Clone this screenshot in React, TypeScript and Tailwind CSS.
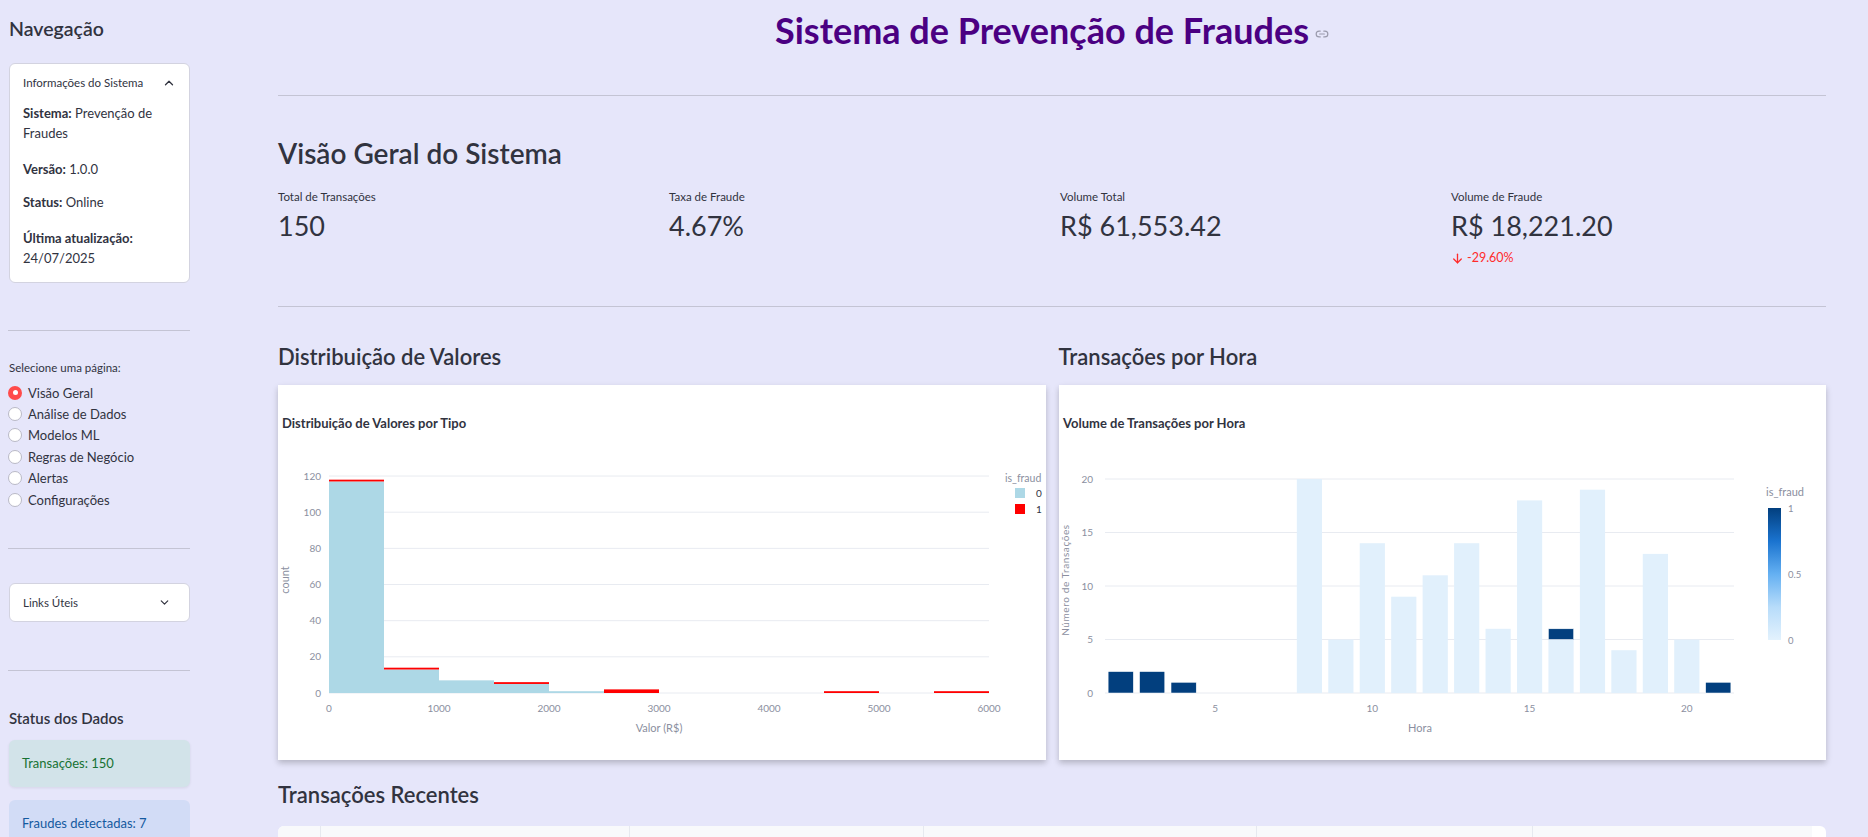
import React from "react";
import { ChevronUp, ChevronDown, Link2 } from "lucide-react";

const FONT = "Lato, sans-serif";

function Radio({ label, selected }: { label: string; selected?: boolean }) {
  return (
    <div className="flex h-[21.4px] items-center">
      {selected ? (
        <span className="ml-[8px] flex h-[14px] w-[14px] items-center justify-center rounded-full bg-[#ff4b4b]">
          <span className="h-[5px] w-[5px] rounded-full bg-white" />
        </span>
      ) : (
        <span className="ml-[8px] h-[14px] w-[14px] rounded-full border border-[#b9b9c6] bg-white" />
      )}
      <span className="ml-[6px] text-[13px] leading-[16px] text-[#31333f]">{label}</span>
    </div>
  );
}

function Divider({ className = "" }: { className?: string }) {
  return <div className={"h-px bg-[#c4c4d4] " + className} />;
}

function HistChart() {
  const y = (v: number) => 308 - v * 1.808;
  const x = (v: number) => 51 + v * 0.11;
  const bins: [number, number, number][] = [
    [0, 117, 1],
    [500, 13, 1],
    [1000, 7, 0],
    [1500, 5, 1],
    [2000, 1, 0],
    [2500, 0, 2],
    [4500, 0, 1],
    [5500, 0, 1],
  ];
  const tick = "#8b8fa0";
  return (
    <svg width={767} height={375} className="block" fontFamily={FONT}>
      <text x={4} y={42.5} fontSize={13} fontWeight={700} fill="#31333f">
        Distribuição de Valores por Tipo
      </text>
      {[0, 20, 40, 60, 80, 100, 120].map((v) => (
        <g key={v}>
          <line x1={51} x2={711} y1={y(v)} y2={y(v)} stroke="#e8ebf1" strokeWidth={1} />
          <text x={43} y={y(v) + 3.5} textAnchor="end" fontSize={10} fill={tick}>
            {v}
          </text>
        </g>
      ))}
      {bins.map(([s, b, r]) => (
        <g key={s}>
          {b > 0 && <rect x={x(s)} y={y(b)} width={55} height={b * 1.808} fill="#add8e6" />}
          {r > 0 && <rect x={x(s)} y={y(b + r)} width={55} height={r * 1.808} fill="#ff0000" />}
        </g>
      ))}
      {[0, 1000, 2000, 3000, 4000, 5000, 6000].map((v) => (
        <text key={v} x={x(v)} y={326.5} textAnchor="middle" fontSize={10} fill={tick}>
          {v}
        </text>
      ))}
      <text x={381} y={347} textAnchor="middle" fontSize={11} fill={tick}>
        Valor (R$)
      </text>
      <text
        x={0}
        y={0}
        transform="translate(11 195) rotate(-90)"
        textAnchor="middle"
        fontSize={11}
        fill={tick}
      >
        count
      </text>
      <text x={727} y={96.5} fontSize={10.5} fill={tick}>
        is_fraud
      </text>
      <rect x={737} y={103} width={10} height={10} fill="#add8e6" />
      <text x={758} y={111.5} fontSize={10} fill="#31333f">
        0
      </text>
      <rect x={737} y={119} width={10} height={10} fill="#ff0000" />
      <text x={758} y={127.5} fontSize={10} fill="#31333f">
        1
      </text>
    </svg>
  );
}

function HourChart() {
  const y = (v: number) => 308 - v * 10.7;
  const x = (h: number) => 46 + (h - 1.5) * 31.45;
  const light = "#e1f0fc";
  const dark = "#023f7e";
  const data: [number, number, number][] = [
    [2, 0, 2],
    [3, 0, 2],
    [4, 0, 1],
    [8, 20, 0],
    [9, 5, 0],
    [10, 14, 0],
    [11, 9, 0],
    [12, 11, 0],
    [13, 14, 0],
    [14, 6, 0],
    [15, 18, 0],
    [16, 5, 1],
    [17, 19, 0],
    [18, 4, 0],
    [19, 13, 0],
    [20, 5, 0],
    [21, 0, 1],
  ];
  const tick = "#8b8fa0";
  const bw = 25.2;
  return (
    <svg width={767} height={375} className="block" fontFamily={FONT}>
      <defs>
        <linearGradient id="blues" x1="0" y1="1" x2="0" y2="0">
          <stop offset="0" stopColor="#e3f2fd" />
          <stop offset="0.25" stopColor="#b7dcfa" />
          <stop offset="0.5" stopColor="#64b0f2" />
          <stop offset="0.75" stopColor="#1a73cf" />
          <stop offset="1" stopColor="#023f7e" />
        </linearGradient>
      </defs>
      <text x={4} y={42.5} fontSize={13} fontWeight={700} fill="#31333f">
        Volume de Transações por Hora
      </text>
      {[0, 5, 10, 15, 20].map((v) => (
        <g key={v}>
          <line x1={46} x2={675} y1={y(v)} y2={y(v)} stroke="#e8ebf1" strokeWidth={1} />
          <text x={34} y={y(v) + 3.5} textAnchor="end" fontSize={10} fill={tick}>
            {v}
          </text>
        </g>
      ))}
      {data.map(([h, l, d]) => (
        <g key={h}>
          {l > 0 && <rect x={x(h) - bw / 2} y={y(l)} width={bw} height={l * 10.7} fill={light} />}
          {d > 0 && (
            <rect
              x={x(h) - bw / 2}
              y={y(l + d)}
              width={bw}
              height={d * 10.7}
              fill={dark}
              stroke="#ffffff"
              strokeWidth={0.5}
            />
          )}
        </g>
      ))}
      {[5, 10, 15, 20].map((v) => (
        <text key={v} x={x(v)} y={326.5} textAnchor="middle" fontSize={10} fill={tick}>
          {v}
        </text>
      ))}
      <text x={361} y={347} textAnchor="middle" fontSize={11} fill={tick}>
        Hora
      </text>
      <text
        x={0}
        y={0}
        transform="translate(10 195) rotate(-90)"
        textAnchor="middle"
        fontSize={10}
        letterSpacing={0.6}
        fill={tick}
      >
        Número de Transações
      </text>
      <text x={707} y={111} fontSize={11} fill={tick}>
        is_fraud
      </text>
      <rect x={709} y={123} width={13} height={132} fill="url(#blues)" />
      <text x={729} y={126.5} fontSize={9.5} fill={tick}>
        1
      </text>
      <text x={729} y={192.5} fontSize={9.5} fill={tick}>
        0.5
      </text>
      <text x={729} y={258.5} fontSize={9.5} fill={tick}>
        0
      </text>
    </svg>
  );
}

function Metric({ label, value, delta }: { label: string; value: string; delta?: string }) {
  return (
    <div>
      <div className="text-[11.5px] leading-[16px] text-[#31333f]">{label}</div>
      <div className="mt-[3.5px] text-[27px] leading-[34px] text-[#31333f]">{value}</div>
      {delta && (
        <div className="mt-[7.5px] flex items-center gap-[3px] text-[12.5px] leading-[16px] text-[#ff2b2b]">
          <svg width="13" height="13" viewBox="0 0 24 24" fill="none" stroke="#ff2b2b" strokeWidth="2.4" strokeLinecap="round" strokeLinejoin="round">
            <path d="M12 4v16" />
            <path d="M5 13l7 7 7-7" />
          </svg>
          <span>{delta}</span>
        </div>
      )}
    </div>
  );
}

export default function App() {
  return (
    <div
      className="flex h-[837px] w-[1868px] overflow-hidden bg-[#e6e6fa] text-[#31333f]"
      style={{ fontFamily: FONT }}
    >
      {/* Sidebar */}
      <aside className="w-[200px] shrink-0 pl-[9px] pr-[10px]">
        <h2 className="mt-[15px] text-[19.5px] font-semibold leading-[28px]">Navegação</h2>
        <div className="mt-[20px] h-[220px] rounded-[6px] border border-[#d3d3e0] bg-white">
          <div className="flex h-[38px] items-center justify-between pl-[13px] pr-[13px]">
            <span className="text-[11.5px] leading-[14px]">Informações do Sistema</span>
            <ChevronUp size={14} strokeWidth={2.2} className="text-[#31333f]" />
          </div>
          <div className="px-[13px] pt-[1px] text-[13px] leading-[20px]">
            <p>
              <b className="font-bold">Sistema:</b> Prevenção de Fraudes
            </p>
            <p className="mt-[16px]">
              <b className="font-bold">Versão:</b> 1.0.0
            </p>
            <p className="mt-[13px]">
              <b className="font-bold">Status:</b> Online
            </p>
            <p className="mt-[16px]">
              <b className="font-bold">Última atualização:</b>
              <br />
              24/07/2025
            </p>
          </div>
        </div>
        <Divider className="mt-[47px] -ml-[1px]" />
        <div className="mt-[29px] text-[11.5px] leading-[16px]">Selecione uma página:</div>
        <div className="mt-[6px] -ml-[9px]">
          <Radio label="Visão Geral" selected />
          <Radio label="Análise de Dados" />
          <Radio label="Modelos ML" />
          <Radio label="Regras de Negócio" />
          <Radio label="Alertas" />
          <Radio label="Configurações" />
        </div>
        <Divider className="mt-[38px] -ml-[1px]" />
        <div className="mt-[34px] flex h-[39px] items-center justify-between rounded-[6px] border border-[#d3d3e0] bg-white pl-[13px] pr-[18px]">
          <span className="text-[11.5px]">Links Úteis</span>
          <ChevronDown size={13} strokeWidth={2.2} />
        </div>
        <Divider className="mt-[48px] -ml-[1px]" />
        <h3 className="mt-[36px] text-[15px] font-semibold leading-[22px]">Status dos Dados</h3>
        <div className="mt-[11px] flex h-[47px] items-center rounded-[6px] bg-[#d2e3e9] pl-[13px] text-[13px] text-[#177233] shadow-[0_1px_3px_rgba(0,0,0,0.08)]">
          Transações: 150
        </div>
        <div className="mt-[13px] flex h-[47px] items-center rounded-[6px] bg-[#d2dcf6] pl-[13px] text-[13px] text-[#145aa0]">
          Fraudes detectadas: 7
        </div>
      </aside>

      {/* Main */}
      <main className="flex-1 pl-[78px] pr-[42px]">
        <div className="mt-[10px] flex h-[40px] items-center justify-center">
          <h1 className="text-[36px] font-bold leading-[40px] text-[#4b0082]">Sistema de Prevenção de Fraudes</h1>
          <Link2 size={14} strokeWidth={2} className="ml-[6px] mt-[8px] text-[#9a9aab]" />
        </div>
        <Divider className="mt-[45px]" />
        <h2 className="mt-[40px] text-[28px] font-semibold leading-[34px]">Visão Geral do Sistema</h2>
        <div className="mt-[19px] grid grid-cols-4 gap-x-[16px]">
          <Metric label="Total de Transações" value="150" />
          <Metric label="Taxa de Fraude" value="4.67%" />
          <Metric label="Volume Total" value="R$ 61,553.42" />
          <Metric label="Volume de Fraude" value="R$ 18,221.20" delta="-29.60%" />
        </div>
        <Divider className="mt-[40px]" />
        <div className="mt-[35.5px] grid grid-cols-2 gap-x-[13px]">
          <div>
            <h3 className="text-[22px] font-semibold leading-[28px]">Distribuição de Valores</h3>
            <div className="mt-[14.5px] h-[375px] overflow-hidden bg-white shadow-[0_3px_6px_rgba(0,0,0,0.22)]">
              <HistChart />
            </div>
          </div>
          <div>
            <h3 className="text-[22px] font-semibold leading-[28px]">Transações por Hora</h3>
            <div className="mt-[14.5px] h-[375px] overflow-hidden bg-white shadow-[0_3px_6px_rgba(0,0,0,0.22)]">
              <HourChart />
            </div>
          </div>
        </div>
        <h3 className="mt-[21px] text-[22px] font-semibold leading-[28px]">Transações Recentes</h3>
        <div className="mt-[17px] h-[60px] overflow-hidden rounded-t-[6px] bg-white">
          <div className="flex h-[35px] border-b border-[#e6e9ef] text-[12.5px] text-[#5b5e6b]">
            <div className="w-[43px] border-r border-[#e6e9ef] bg-[#f8f9fb]" />
            <div className="w-[309px] border-r border-[#e6e9ef] bg-[#f8f9fb] pl-[70px] pt-[10px]">transaction_id</div>
            <div className="w-[294px] border-r border-[#e6e9ef] bg-[#f8f9fb] pl-[10px] pt-[10px]">timestamp</div>
            <div className="w-[333px] border-r border-[#e6e9ef] bg-[#f8f9fb] pl-[10px] pt-[10px]">amount</div>
            <div className="w-[276px] border-r border-[#e6e9ef] bg-[#f8f9fb] pl-[10px] pt-[10px]">hour</div>
            <div className="w-[279px] bg-[#f8f9fb] pl-[20px] pt-[10px]">is_fraud</div>
          </div>
        </div>
      </main>
    </div>
  );
}
